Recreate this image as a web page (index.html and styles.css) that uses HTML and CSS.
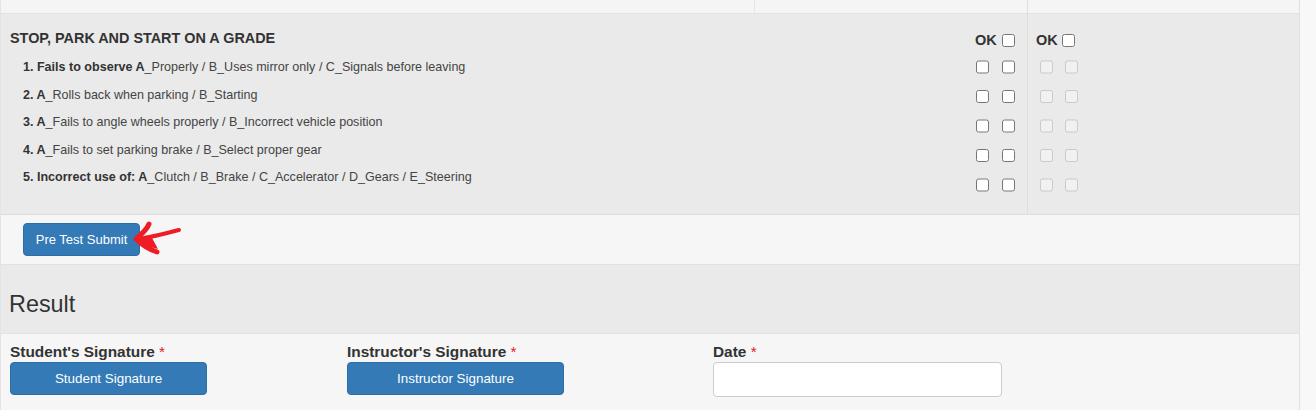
FILE: index.html
```html
<!DOCTYPE html>
<html lang="en">
<head>
    <meta charset="UTF-8">
    <title>Pre Test</title>
    <link rel="stylesheet" href="styles.css">
</head>
<body>
    <div class="panel">
        <div class="top-row">
            <div class="top-cell top-main"></div>
            <div class="top-cell top-mid"></div>
            <div class="top-cell"></div>
        </div>

        <div class="grade-row">
            <div class="grade-text">
                <h4 class="grade-title">STOP, PARK AND START ON A GRADE</h4>
                <p class="item"><b>1. Fails to observe A</b>_Properly / B_Uses mirror only / C_Signals before leaving</p>
                <p class="item"><b>2. A</b>_Rolls back when parking / B_Starting</p>
                <p class="item"><b>3. A</b>_Fails to angle wheels properly / B_Incorrect vehicle position</p>
                <p class="item"><b>4. A</b>_Fails to set parking brake / B_Select proper gear</p>
                <p class="item"><b>5. Incorrect use of: A</b>_Clutch / B_Brake / C_Accelerator / D_Gears / E_Steering</p>
            </div>

            <div class="checks checks-first">
                <div class="ok-line"><b>OK</b><input type="checkbox"></div>
                <div class="check-line"><input type="checkbox"><input type="checkbox"></div>
                <div class="check-line"><input type="checkbox"><input type="checkbox"></div>
                <div class="check-line"><input type="checkbox"><input type="checkbox"></div>
                <div class="check-line"><input type="checkbox"><input type="checkbox"></div>
                <div class="check-line"><input type="checkbox"><input type="checkbox"></div>
            </div>

            <div class="checks checks-second">
                <div class="ok-line"><b>OK</b><input type="checkbox"></div>
                <div class="check-line"><input type="checkbox" disabled><input type="checkbox" disabled></div>
                <div class="check-line"><input type="checkbox" disabled><input type="checkbox" disabled></div>
                <div class="check-line"><input type="checkbox" disabled><input type="checkbox" disabled></div>
                <div class="check-line"><input type="checkbox" disabled><input type="checkbox" disabled></div>
                <div class="check-line"><input type="checkbox" disabled><input type="checkbox" disabled></div>
            </div>
        </div>

        <div class="submit-row">
            <div class="submit-wrap">
                <button class="btn btn-submit">Pre Test Submit</button>
                <!-- flecha roja dibujada encima del boton -->
                <svg class="arrow" width="52" height="36" viewBox="0 0 52 36">
                    <path d="M18 3 C16 8 11 13 5 18 C10 23 17 28 26 31" fill="none" stroke="#ee1c25" stroke-width="5" stroke-linecap="round" stroke-linejoin="round"/>
                    <path d="M6 18 C18 17 32 13 48 9" fill="none" stroke="#ee1c25" stroke-width="4" stroke-linecap="round"/>
                    <path d="M7 18 L20 15 L27 28 L15 25 Z" fill="#ee1c25"/>
                </svg>
            </div>
        </div>

        <div class="result-row">
            <h3 class="result-title">Result</h3>
        </div>

        <div class="sign-row">
            <div class="field field-student">
                <label class="field-label">Student's Signature <span class="req">*</span></label>
                <button class="btn btn-student">Student Signature</button>
            </div>
            <div class="field field-instructor">
                <label class="field-label">Instructor's Signature <span class="req">*</span></label>
                <button class="btn btn-instructor">Instructor Signature</button>
            </div>
            <div class="field field-date">
                <label class="field-label">Date <span class="req">*</span></label>
                <input class="date-input" type="text">
            </div>
        </div>
    </div>
</body>
</html>
```

FILE: styles.css
```css
* {
    box-sizing: border-box;
}

html, body {
    height: 100%;
}

body {
    margin: 0;
    overflow: hidden;
    background-color: #f8f8f8;
    font-family: "Liberation Sans", Arial, sans-serif;
    color: #333;
}

.panel {
    width: 1300px;
    margin-left: 0;
    border-left: 1px solid #e4e4e4;
    border-right: 1px solid #e0e0e0;
}

.top-row {
    display: flex;
    height: 13px;
    background-color: #f5f5f5;
}

.top-cell {
    flex: 1;
}

.top-main {
    flex: none;
    width: 754px;
    border-right: 1px solid #e6e6e6;
}

.top-mid {
    flex: none;
    width: 273px;
    border-right: 1px solid #dedede;
}

.grade-row {
    display: flex;
    height: 202px;
    background-color: #eaeaea;
    border-top: 1px solid #e2e2e2;
    border-bottom: 1px solid #dcdcdc;
}

.grade-text {
    width: 975px;
    padding: 16px 0 0 9px;
}

.grade-title {
    margin: 0 0 12px;
    font-size: 14.4px;
    line-height: 17px;
    font-weight: bold;
}

.item {
    margin: 0 0 0 13px;
    height: 27.6px;
    font-size: 12.55px;
    line-height: 17px;
    color: #444;
}

.item b {
    color: #333;
}

.checks {
    padding-top: 19px;
}

.checks-first {
    width: 52px;
    border-right: 1px solid #dedede;
}

.checks-second {
    padding-left: 8px;
}

.ok-line {
    display: flex;
    align-items: center;
    height: 14px;
    margin-bottom: 5px;
    margin-left: -1px;
    font-size: 14.5px;
    color: #333;
}

.ok-line input {
    margin: 0 0 0 5px;
}

.checks-second .ok-line {
    margin-left: 0;
}

.checks-second .ok-line input {
    margin-left: 4px;
}

.check-line {
    display: flex;
    gap: 13px;
    height: 29.5px;
}

.check-line input {
    margin: 0;
}

.checks-second .check-line {
    margin-left: 4px;
    gap: 12px;
}

.submit-row {
    height: 49px;
    padding: 8px 0 0 22px;
    background-color: #f6f6f6;
}

.submit-wrap {
    position: relative;
    width: 118px;
}

.btn {
    display: block;
    height: 33px;
    padding: 0;
    background-color: #337ab7;
    border: 1px solid #2e6da4;
    border-radius: 4px;
    color: #fff;
    font-family: "Liberation Sans", Arial, sans-serif;
    font-size: 13.4px;
    font-weight: normal;
    text-align: center;
}

.btn-submit {
    width: 117px;
    font-size: 13px;
}

.arrow {
    position: absolute;
    left: 108px;
    top: -2px;
}

.result-row {
    height: 70px;
    padding: 26px 0 0 8px;
    background-color: #eaeaea;
    border-top: 1px solid #e2e2e2;
    border-bottom: 1px solid #e4e4e4;
}

.result-title {
    margin: 0;
    font-size: 23.4px;
    line-height: 26px;
    font-weight: normal;
}

.sign-row {
    display: flex;
    padding: 10px 0 0 9px;
    height: 76px;
    background-color: #f6f6f6;
}

.field-label {
    display: block;
    height: 18px;
    font-size: 15.4px;
    line-height: 16px;
    font-weight: bold;
    white-space: nowrap;
}

.field-student {
    width: 337px;
}

.field-instructor {
    width: 366px;
}

.req {
    color: #e02020;
    font-weight: normal;
}

.btn-student {
    width: 197px;
}

.btn-instructor {
    width: 217px;
}

.date-input {
    display: block;
    width: 289px;
    height: 35px;
    background-color: #fff;
    border: 1px solid #ccc;
    border-radius: 4px;
}
```
